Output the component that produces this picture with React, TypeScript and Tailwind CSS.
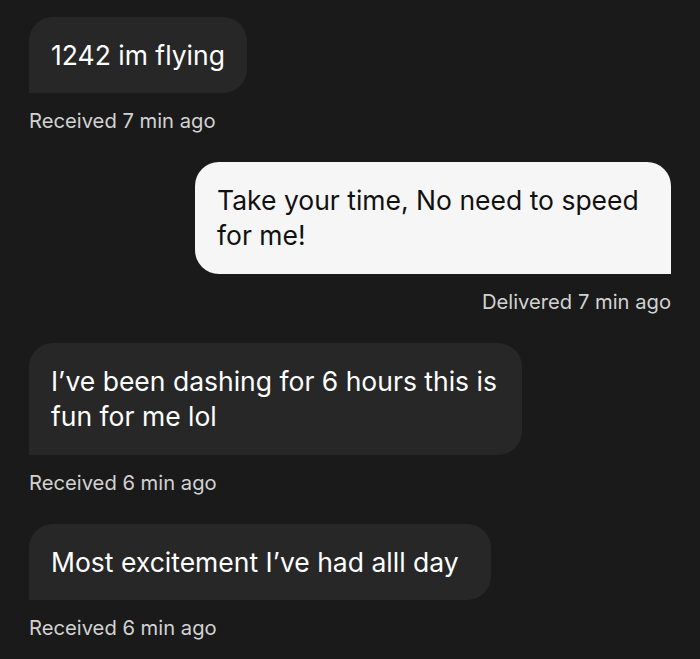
export default function App() {
  const font = { fontFamily: "Inter, 'Noto Sans', sans-serif" };
  return (
    <div
      className="w-[700px] h-[659px] bg-[#1a1a1a] overflow-hidden px-[29px] pt-[17px] flex flex-col"
      style={font}
    >
      <div className="self-start w-[218px] bg-[#272727] text-white rounded-t-[24px] rounded-br-[24px] px-[22px] py-[21px] text-[26.5px] leading-[34px] whitespace-nowrap">
        1242 im flying
      </div>
      <div className="mt-[16px] text-[20.2px] leading-[24px] text-[#d2d2d2]">Received 7 min ago</div>

      <div className="mt-[29px] self-end w-[476px] bg-[#f6f6f6] text-[#111111] rounded-t-[24px] rounded-bl-[24px] px-[22px] py-[21px] text-[26.5px] leading-[35px] whitespace-nowrap">
        Take your time, No need to speed
        <br />
        for me!
      </div>
      <div className="mt-[16px] self-end text-[20.2px] leading-[24px] text-[#d2d2d2]">Delivered 7 min ago</div>

      <div className="mt-[29px] self-start w-[493px] bg-[#272727] text-white rounded-t-[24px] rounded-br-[24px] px-[22px] py-[21px] text-[26.5px] leading-[35px] whitespace-nowrap">
        I’ve been dashing for 6 hours this is
        <br />
        fun for me lol
      </div>
      <div className="mt-[16px] text-[20.2px] leading-[24px] text-[#d2d2d2]">Received 6 min ago</div>

      <div className="mt-[29px] self-start w-[462px] bg-[#272727] text-white rounded-t-[24px] rounded-br-[24px] px-[22px] py-[21px] text-[26.5px] leading-[34px] whitespace-nowrap">
        Most excitement I’ve had alll day
      </div>
      <div className="mt-[16px] text-[20.2px] leading-[24px] text-[#d2d2d2]">Received 6 min ago</div>
    </div>
  );
}
